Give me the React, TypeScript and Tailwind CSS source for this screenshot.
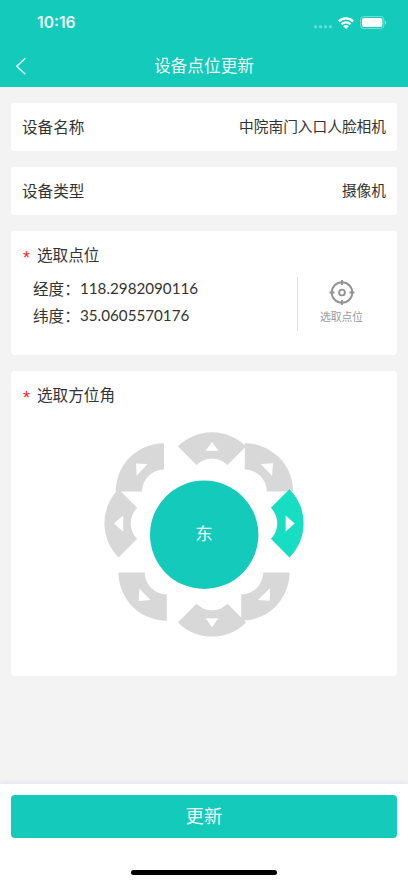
import React, { useState } from 'react';

type Direction = {
  name: string;
  cx: number;
  cy: number;
  angle: number;
  arrow: string;
};

// Every petal is a quarter ring around (cx, cy), angle is the middle of the ring
const DIRECTIONS: Direction[] = [
  { name: '北', cx: 112, cy: 60.5, angle: -90, arrow: '105.5,30.8 118.5,30.8 112,21.8' },
  { name: '西北', cx: 64, cy: 71.5, angle: -135, arrow: '36,43.6 47.4,44 36.7,55.7' },
  { name: '东北', cx: 144.8, cy: 71.5, angle: -45, arrow: '160.7,44 173,43.3 172.1,55.7' },
  { name: '西', cx: 52.7, cy: 103.3, angle: 180, arrow: '23.1,95.4 23.1,111.4 13.8,103.4' },
  { name: '西南', cx: 66.8, cy: 152.5, angle: 135, arrow: '39.3,168.6 50.5,180 38.7,181' },
  { name: '南', cx: 112, cy: 168.3, angle: 90, arrow: '105.5,198.3 118.5,198.3 112,207.3' },
  { name: '东南', cx: 141.2, cy: 152.5, angle: 45, arrow: '169.8,168.4 169.8,180.7 157.7,180' },
  { name: '东', cx: 155.3, cy: 103.3, angle: 0, arrow: '185.6,95.4 185.6,111.4 194.6,103.4' },
];

const petalPath = ({ cx, cy, angle }: Direction) => {
  const outer = 48.3;
  const inner = 22;
  const point = (r: number, deg: number) => {
    const rad = (deg * Math.PI) / 180;
    return `${(cx + r * Math.cos(rad)).toFixed(2)} ${(cy + r * Math.sin(rad)).toFixed(2)}`;
  };
  const from = angle - 45;
  const to = angle + 45;
  return `M${point(outer, from)} A${outer} ${outer} 0 0 1 ${point(outer, to)} L${point(inner, to)} A${inner} ${inner} 0 0 0 ${point(inner, from)} Z`;
};

const StatusBar: React.FC = () => (
  <div className="flex h-[44px] items-center justify-between pl-[37px] pr-[21px] pt-[2px]">
    <span className="font-['Inter',sans-serif] text-[15.7px] font-semibold leading-5 text-white/90">10:16</span>
    <div className="flex items-center">
      <svg width="20" height="14" viewBox="0 0 20 14" fill="#fff" fillOpacity="0.35">
        <rect x="1" y="9.3" width="3" height="3" rx="0.8" />
        <rect x="6" y="9.3" width="3" height="3" rx="0.8" />
        <rect x="11" y="9.3" width="3" height="3" rx="0.8" />
        <rect x="16" y="9.3" width="3" height="3" rx="0.8" />
      </svg>
      <svg className="ml-[5px]" width="16" height="12" viewBox="0 0 16 12" fill="none" stroke="#fff" strokeWidth="2.3">
        <path d="M.9 4.3a10.2 10.2 0 0 1 14.2 0" />
        <path d="M3.5 7.2a6.4 6.4 0 0 1 9 0" />
        <path d="M8 12 5.2 9.3a3.9 3.9 0 0 1 5.6 0Z" fill="#fff" stroke="none" />
      </svg>
      <svg className="ml-[6px] -mt-px" width="27" height="13" viewBox="0 0 27 13" fill="none">
        <rect x="0.5" y="0.5" width="23.4" height="12" rx="3.4" stroke="#fff" strokeOpacity="0.4" />
        <rect x="2" y="2" width="20.4" height="9" rx="2" fill="#fff" />
        <path d="M25 4.4c1.6.6 1.6 3.6 0 4.2Z" fill="#fff" fillOpacity="0.5" />
      </svg>
    </div>
  </div>
);

const InfoRow: React.FC<{ label: string; value: string }> = ({ label, value }) => (
  <section className="flex h-12 items-center justify-between rounded-[4px] bg-white px-[11px]">
    <span className="text-[15.6px]">{label}</span>
    <span className="pb-px text-[14.7px]">{value}</span>
  </section>
);

const RequiredTitle: React.FC<{ children: React.ReactNode }> = ({ children }) => (
  <h2 className="flex h-6 items-center text-[15.6px]">
    <span className="mr-[6px] w-2 pt-[6px] font-['Liberation_Sans',sans-serif] text-[18px] font-normal leading-none text-[#ff1a1a]">*</span>
    {children}
  </h2>
);

const App: React.FC = () => {
  const [selected, setSelected] = useState('东');

  return (
    <div className="flex h-[883px] w-full flex-col bg-[#f3f3f3] font-['Noto_Sans_CJK_SC',sans-serif] text-[#333]">
      <header className="h-[87px] shrink-0 bg-[#14caba]">
        <StatusBar />
        <div className="grid h-[43px] grid-cols-[44px_1fr_44px] items-center">
          <button className="flex h-full items-center pl-[15px]">
            <svg width="12" height="18" viewBox="0 0 12 18" fill="none" stroke="#fff" strokeOpacity="0.9" strokeWidth="1.5">
              <path d="M10.3 1.2 1.8 9.2l8.5 8" />
            </svg>
          </button>
          <h1 className="pb-[2px] text-center text-[16.7px] leading-6 text-white/95">设备点位更新</h1>
        </div>
      </header>

      <main className="flex flex-1 flex-col gap-4 px-[11px] pt-4">
        <InfoRow label="设备名称" value="中院南门入口人脸相机" />
        <InfoRow label="设备类型" value="摄像机" />

        <section className="h-[124px] rounded-[4px] bg-white px-3 pt-3">
          <RequiredTitle>选取点位</RequiredTitle>
          <div className="flex pt-[10px]">
            <div className="-mt-[2px] flex-1 pl-[10px] text-[15.6px] leading-[27px]">
              <div className="flex">
                <span className="w-[47px]">经度：</span>
                <span className="font-['Lato',sans-serif] text-[15.2px]">118.2982090116</span>
              </div>
              <div className="flex">
                <span className="w-[47px]">纬度：</span>
                <span className="font-['Lato',sans-serif] text-[15.2px]">35.0605570176</span>
              </div>
            </div>
            <button className="flex h-[54px] w-[88px] flex-col items-center border-l border-[#ddd] text-[#999]">
              <svg className="mt-[2px]" width="26" height="26" viewBox="0 0 26 26" fill="none" stroke="#949494" strokeWidth="1.9">
                <circle cx="13" cy="13.5" r="10.3" />
                <circle cx="13" cy="13.5" r="2.9" />
                <path d="M13 1v5M13 21v5M.5 13.5h5M20.5 13.5h5" />
              </svg>
              <span className="mt-[3px] text-[10.8px] leading-4">选取点位</span>
            </button>
          </div>
        </section>

        <section className="h-[305px] rounded-[4px] bg-white px-3 pt-3">
          <RequiredTitle>选取方位角</RequiredTitle>
          <svg className="ml-[77px] mt-[13px]" width="208" height="224" viewBox="0 0 208 224">
            {DIRECTIONS.map((direction) => (
              <g key={direction.name} className="cursor-pointer" onClick={() => setSelected(direction.name)}>
                <path d={petalPath(direction)} fill={selected === direction.name ? '#17dec2' : '#d8d8d8'} />
                <polygon points={direction.arrow} fill="#fff" />
              </g>
            ))}
            <circle cx="104.2" cy="114.8" r="54.2" fill="#14caba" />
            <text x="104" y="120" textAnchor="middle" fontSize="17.5" fill="#fff" fillOpacity="0.95">
              {selected}
            </text>
          </svg>
        </section>
      </main>

      <footer className="flex h-[99px] shrink-0 flex-col items-center bg-white px-[11px] pt-[11px] shadow-[0_-1px_5px_rgba(120,120,220,0.14)]">
        <button className="h-[43px] w-full rounded-[4px] bg-[#14caba] pb-[2px] text-[18.4px] text-white/95">更新</button>
        <div className="mt-8 h-[5px] w-[146px] rounded-full bg-black" />
      </footer>
    </div>
  );
};

export default App;
